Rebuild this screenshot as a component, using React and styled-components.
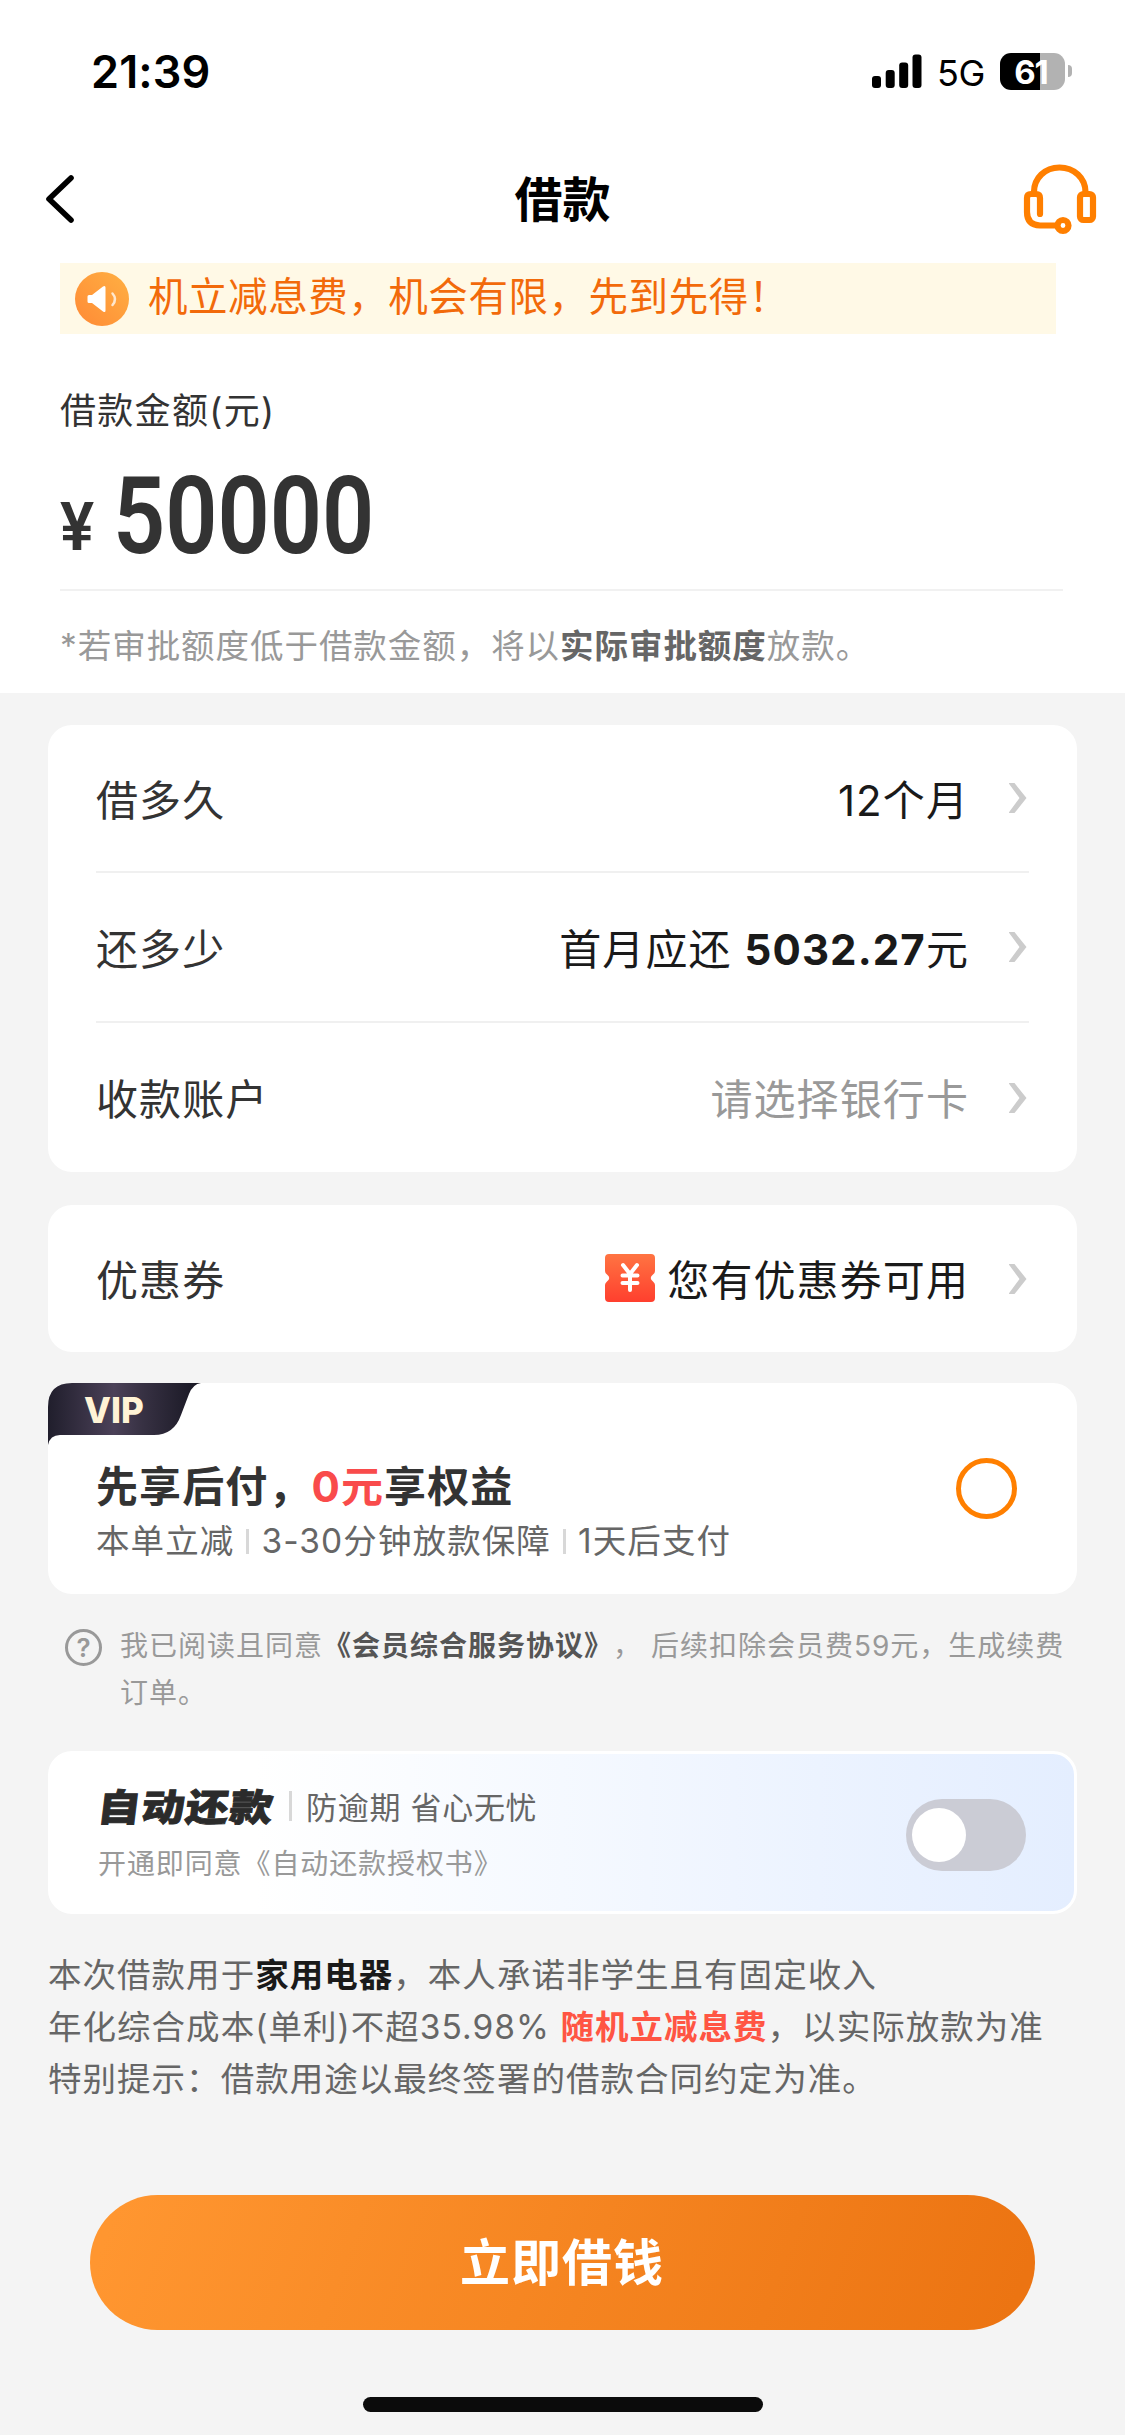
import { useState } from "react";
import styled, { createGlobalStyle } from "styled-components";

const GlobalStyle = createGlobalStyle`
    * {
        box-sizing: border-box;
    }
    body {
        margin: 0;
        background-color: #f4f4f4;
        font-family: Inter, "Noto Sans CJK SC", sans-serif;
        text-spacing-trim: space-all;
        color: #333;
    }
`;

const Container = styled.div`
    width: 1125px;
    height: 2435px;
    display: flex;
    flex-direction: column;
    background-color: #f4f4f4;
    overflow: hidden;
    white-space: nowrap;
`;

const Top = styled.div`
    height: 693px;
    background-color: #fff;
`;

const StatusBar = styled.div`
    height: 142px;
    padding: 0 53px 0 91px;
    display: flex;
    justify-content: space-between;
    align-items: center;
    color: #000;
`;

const Time = styled.span`
    font-size: 45px;
    font-weight: 600;
    letter-spacing: 0.1px;
`;

const StatusIcons = styled.div`
    display: flex;
    align-items: center;
`;

const Network = styled.span`
    width: 48px;
    margin: 4px 15px 0 15px;
    font-size: 36px;
    letter-spacing: -0.5px;
`;

const Battery = styled.div`
    width: 65px;
    height: 37px;
    padding-right: 3px;
    border-radius: 11px;
    background: linear-gradient(90deg, #000 61%, #b2b2b2 61%);
    color: #fff;
    font-size: 33px;
    font-weight: 700;
    line-height: 38px;
    letter-spacing: -1px;
    text-align: center;
`;

const BatteryCap = styled.div`
    width: 4px;
    height: 12px;
    margin-left: 3px;
    border-radius: 0 6px 6px 0;
    background-color: #b2b2b2;
`;

const Nav = styled.div`
    height: 121px;
    padding: 0 26px 8px 42px;
    display: grid;
    grid-template-columns: 1fr auto 1fr;
    align-items: center;
`;

const NavTitle = styled.h1`
    margin: 2px 16px 0 0;
    font-size: 48px;
    font-weight: 700;
    line-height: 60px;
    color: #000;
`;

const NavRight = styled.div`
    display: flex;
    justify-content: flex-end;
`;

const Notice = styled.div`
    height: 71px;
    margin: 0 69px 0 60px;
    padding-left: 15px;
    display: flex;
    align-items: center;
    gap: 19px;
    background-color: #fff9e6;
    color: #f26a0a;
    font-size: 39.5px;
    letter-spacing: 0.55px;

    span {
        line-height: 64px;
        padding-bottom: 3px;
    }
`;

const AmountBox = styled.div`
    margin: 0 62px 0 60px;
    border-bottom: 2px solid #f1f1f1;
    height: 257px;
`;

const AmountLabel = styled.div`
    padding-top: 51px;
    font-size: 36px;
    line-height: 52px;
    letter-spacing: 1.3px;
`;

const Amount = styled.div`
    display: flex;
    align-items: baseline;
    margin-top: 16px;
    font-family: Roboto, sans-serif;
    line-height: 128px;
`;

const Yen = styled.span`
    width: 53px;
    font-size: 66px;
    font-weight: 600;
    transform: translateY(-3px) scaleX(0.97);
    transform-origin: left;
`;

const AmountValue = styled.span`
    font-size: 107px;
    font-weight: 650;
    transform: scaleX(0.855);
    transform-origin: left;
`;

const AmountNote = styled.p`
    margin: 29px 0 0 60px;
    font-size: 33.5px;
    line-height: 52px;
    letter-spacing: 0.95px;
    color: #999;

    b {
        color: #666;
    }
`;

const Card = styled.div`
    margin: ${props => props.$top}px 48px 0;
    border-radius: 24px;
    background-color: #fff;
    padding: 0 48px;
`;

const Row = styled.div`
    height: ${props => props.$height}px;
    display: flex;
    align-items: center;
    font-size: 42px;
    letter-spacing: 1.1px;
    border-bottom: ${props => (props.$line ? "2px solid #f0f0f0" : "none")};
`;

const RowLabel = styled.span`
    flex: 1;
    padding-bottom: 2px;
`;

const RowValue = styled.span`
    display: flex;
    align-items: center;
    gap: 11px;
    margin-right: 40px;
    padding-bottom: 2px;
    color: ${props => (props.$muted ? "#999" : "#1a1a1a")};
`;

const VipCard = styled(Card)`
    position: relative;
    height: 211px;
    padding: 77px 60px 0 48px;
    display: flex;
    justify-content: space-between;
`;

const VipBadge = styled.div`
    position: absolute;
    left: 0;
    top: 0;
    width: 154px;
    height: 62px;

    svg {
        display: block;
    }
`;

const VipText = styled.span`
    position: absolute;
    left: 36px;
    top: 5px;
    font-size: 35px;
    font-weight: 800;
    line-height: 44px;
    color: #fff3d6;
`;

const VipTitle = styled.div`
    font-size: 42px;
    font-weight: 700;
    line-height: 54px;
    letter-spacing: 1.1px;
`;

const Red = styled.span`
    color: #f94b4b;
`;

const VipTags = styled.div`
    display: flex;
    align-items: center;
    font-size: 33.5px;
    line-height: 54px;
    letter-spacing: 1.1px;
    color: #666;
`;

const Divider = styled.i`
    width: 3px;
    height: ${props => props.$height}px;
    margin: 0 ${props => props.$gap}px;
    background-color: #d8d8d8;
`;

const Radio = styled.button`
    width: 61px;
    height: 61px;
    margin-top: -2px;
    padding: 0;
    border: 5px solid #ff7f00;
    border-radius: 50%;
    background-color: ${props => (props.$checked ? "#ff7f00" : "#fff")};
    cursor: pointer;
`;

const Agreement = styled.div`
    display: flex;
    padding: 28px 48px 0 65px;
    height: 157px;
`;

const Question = styled.div`
    width: 37px;
    height: 37px;
    margin: 7px 18px 0 0;
    border: 3px solid #999;
    border-radius: 50%;
    font-size: 26px;
    font-weight: 600;
    line-height: 31px;
    text-align: center;
    color: #999;
`;

const AgreementText = styled.p`
    margin: 1px 0 0;
    font-size: 28px;
    line-height: 46.5px;
    letter-spacing: 1px;
    color: #999;

    b {
        color: #555;
    }
`;

const AutoCard = styled.div`
    height: 163px;
    margin: 0 48px;
    padding: 5px 48px 0 47px;
    display: flex;
    align-items: center;
    justify-content: space-between;
    border: 3px solid #fff;
    border-radius: 24px;
    background: linear-gradient(90deg, #fff 20%, #f5f9ff 50%, #ecf3ff 75%, #e4eeff 100%);
`;

const AutoHead = styled.div`
    display: flex;
    align-items: center;
    height: 50px;
    font-size: 31px;
    letter-spacing: 0.7px;
    color: #666;
`;

const AutoTitle = styled.span`
    width: 177px;
    padding-top: 3px;
    font-size: 43px;
    font-weight: 900;
    letter-spacing: 1px;
    line-height: 52px;
    color: #2b2b2b;
    -webkit-text-stroke: 1px #2b2b2b;
    transform: skewX(-7deg) scaleY(0.87);
`;

const AutoSub = styled.div`
    font-size: 28px;
    line-height: 52px;
    margin-top: 7px;
    letter-spacing: 0.9px;
    color: #999;
`;

const Switch = styled.button`
    width: 120px;
    height: 72px;
    padding: 0 6px;
    display: flex;
    align-items: center;
    justify-content: ${props => (props.$on ? "flex-end" : "flex-start")};
    border: none;
    border-radius: 36px;
    background-color: ${props => (props.$on ? "#ff7f00" : "#cbccd5")};
    cursor: pointer;
`;

const Knob = styled.span`
    width: 54px;
    height: 54px;
    border-radius: 50%;
    background-color: #fff;
`;

const Terms = styled.p`
    margin: 35px 48px 0;
    font-size: 33.5px;
    line-height: 52px;
    letter-spacing: 1.03px;
    color: #666;

    b {
        color: #1a1a1a;
    }
    ${Red} {
        color: #ff5543;
        font-weight: 700;
    }
`;

const Submit = styled.button`
    flex: none;
    width: 945px;
    height: 135px;
    margin: 90px auto 0;
    padding: 0 1px 7px 0;
    border: none;
    border-radius: 68px;
    background: linear-gradient(110deg, #ff9630 3%, #ec7412 97%);
    color: #fff;
    font-family: inherit;
    font-size: 50px;
    font-weight: 700;
    letter-spacing: 1px;
    cursor: pointer;
`;

const HomeIndicator = styled.div`
    flex: none;
    width: 400px;
    height: 15px;
    margin: 67px auto 0;
    border-radius: 8px;
    background-color: #0b0b0b;
`;

const Signal = () => (
    <svg width="50" height="34" viewBox="0 0 50 34">
        <rect x="0" y="22" width="9" height="12" rx="3" />
        <rect x="13.7" y="16" width="9" height="18" rx="3" />
        <rect x="27.2" y="8.5" width="9" height="25.5" rx="3" />
        <rect x="40.5" y="0.5" width="9" height="33.5" rx="3" />
    </svg>
);

const Back = () => (
    <svg width="36" height="56" viewBox="0 0 36 56" fill="none" stroke="#000" strokeWidth="5.6" strokeLinecap="round" strokeLinejoin="round">
        <path d="M29 7 7 28l22 21" />
    </svg>
);

const Headset = () => (
    <svg width="78" height="76" viewBox="0 0 78 76" fill="none" stroke="#ff7f00" strokeWidth="6.2" strokeLinecap="round" strokeLinejoin="round">
        <path d="M13 31C13 17 24 6.500 38.500 6.500S64.500 17 64.500 31" />
        <path d="M19 53V37q0-4-4-4h-5q-4 0-4 4v14q0 13 13 13.500h15" />
        <rect x="59" y="33" width="13" height="26" rx="3.500" />
        <circle cx="42" cy="64.500" r="5.500" />
    </svg>
);

const Speaker = () => (
    <svg width="54" height="54" viewBox="0 0 54 54">
        <defs>
            <linearGradient id="speaker" x1="0" y1="1" x2="1" y2="0">
                <stop offset="0" stopColor="#ff8a35" />
                <stop offset="1" stopColor="#ffb043" />
            </linearGradient>
        </defs>
        <circle cx="27" cy="27" r="27" fill="url(#speaker)" />
        <path d="M12.500 24.500q0-1.500 1.500-1.500h3l11-8.500q2.500-1.500 2.500 1v23q0 2.500-2.500 1L17 31h-3q-1.500 0-1.500-1.500z" fill="#fff" />
        <path d="M37.500 21.500q5 5.500 0 11.500" fill="none" stroke="#fff" strokeOpacity=".75" strokeWidth="2.500" strokeLinecap="round" />
    </svg>
);

const Chevron = () => (
    <svg width="20" height="32" viewBox="0 0 20 32" fill="#ccc">
        <path d="M-.5 1H5.500L17.500 16 5.500 31H-.5l11-15z" />
    </svg>
);

const Coupon = () => (
    <svg width="52" height="48" viewBox="0 0 52 48">
        <defs>
            <linearGradient id="coupon" x1="0" y1="0" x2="0" y2="1">
                <stop offset="0" stopColor="#ff7442" />
                <stop offset="1" stopColor="#ff3f2e" />
            </linearGradient>
        </defs>
        <path d="M5 0h42q4 0 4 4v13q0 2-2 3.500-4.500 3.500 0 7 2 1.500 2 3.500v13q0 4-4 4H5q-4 0-4-4V31q0-2 2-3.500 4.500-3.500 0-7Q1 19 1 17V4q0-4 4-4z" fill="url(#coupon)" />
        <path d="M19 11l7 9 7-9M26 20v16M18.500 21.500h15M18.500 29h15" fill="none" stroke="#fff" strokeWidth="4" strokeLinecap="round" />
    </svg>
);

const BadgeShape = () => (
    <svg width="154" height="62" viewBox="0 0 154 62">
        <defs>
            <linearGradient id="badge" x1="0" y1="0" x2="1" y2="0">
                <stop offset="0" stopColor="#201e2c" />
                <stop offset=".43" stopColor="#4b4158" />
                <stop offset=".62" stopColor="#373143" />
                <stop offset="1" stopColor="#171622" />
            </linearGradient>
        </defs>
        <path d="M0 62V24Q0 0 24 0h129q-8 1-12 11l-8 21q-7 20-27 20H12Q2 52 0 62z" fill="url(#badge)" />
    </svg>
);

const App = () => {

    const [vip, setVip] = useState(false);
    const [auto, setAuto] = useState(false);

    return (
        <Container>
            <GlobalStyle />
            <Top>
                <StatusBar>
                    <Time>21:39</Time>
                    <StatusIcons>
                        <Signal />
                        <Network>5G</Network>
                        <Battery>61</Battery>
                        <BatteryCap />
                    </StatusIcons>
                </StatusBar>
                <Nav>
                    <Back />
                    <NavTitle>借款</NavTitle>
                    <NavRight><Headset /></NavRight>
                </Nav>
                <Notice>
                    <Speaker />
                    <span>机立减息费，机会有限，先到先得！</span>
                </Notice>
                <AmountBox>
                    <AmountLabel>借款金额(元)</AmountLabel>
                    <Amount>
                        <Yen>¥</Yen>
                        <AmountValue>50000</AmountValue>
                    </Amount>
                </AmountBox>
                <AmountNote>*若审批额度低于借款金额，将以<b>实际审批额度</b>放款。</AmountNote>
            </Top>

            <Card $top={32}>
                <Row $height={148} $line>
                    <RowLabel>借多久</RowLabel>
                    <RowValue>12个月</RowValue>
                    <Chevron />
                </Row>
                <Row $height={150} $line>
                    <RowLabel>还多少</RowLabel>
                    <RowValue><span>首月应还 <b>5032.27</b>元</span></RowValue>
                    <Chevron />
                </Row>
                <Row $height={149}>
                    <RowLabel>收款账户</RowLabel>
                    <RowValue $muted>请选择银行卡</RowValue>
                    <Chevron />
                </Row>
            </Card>

            <Card $top={33}>
                <Row $height={147}>
                    <RowLabel>优惠券</RowLabel>
                    <RowValue><Coupon />您有优惠券可用</RowValue>
                    <Chevron />
                </Row>
            </Card>

            <VipCard $top={31}>
                <VipBadge>
                    <BadgeShape />
                    <VipText>VIP</VipText>
                </VipBadge>
                <div>
                    <VipTitle>先享后付，<Red>0元</Red>享权益</VipTitle>
                    <VipTags>
                        本单立减
                        <Divider $height={25} $gap={12} />
                        3-30分钟放款保障
                        <Divider $height={25} $gap={12} />
                        1天后支付
                    </VipTags>
                </div>
                <Radio $checked={vip} onClick={() => setVip(!vip)} />
            </VipCard>

            <Agreement>
                <Question>?</Question>
                <AgreementText>
                    我已阅读且同意<b>《会员综合服务协议》</b>， 后续扣除会员费59元，生成续费
                    <br />
                    订单。
                </AgreementText>
            </Agreement>

            <AutoCard>
                <div>
                    <AutoHead>
                        <AutoTitle>自动还款</AutoTitle>
                        <Divider $height={30} $gap={14} />
                        防逾期 省心无忧
                    </AutoHead>
                    <AutoSub>开通即同意《自动还款授权书》</AutoSub>
                </div>
                <Switch $on={auto} onClick={() => setAuto(!auto)}>
                    <Knob />
                </Switch>
            </AutoCard>

            <Terms>
                本次借款用于<b>家用电器</b>，本人承诺非学生且有固定收入
                <br />
                年化综合成本(单利)不超35.98% <Red>随机立减息费</Red>，以实际放款为准
                <br />
                特别提示：借款用途以最终签署的借款合同约定为准。
            </Terms>

            <Submit>立即借钱</Submit>
            <HomeIndicator />
        </Container>
    );
};

export default App;
